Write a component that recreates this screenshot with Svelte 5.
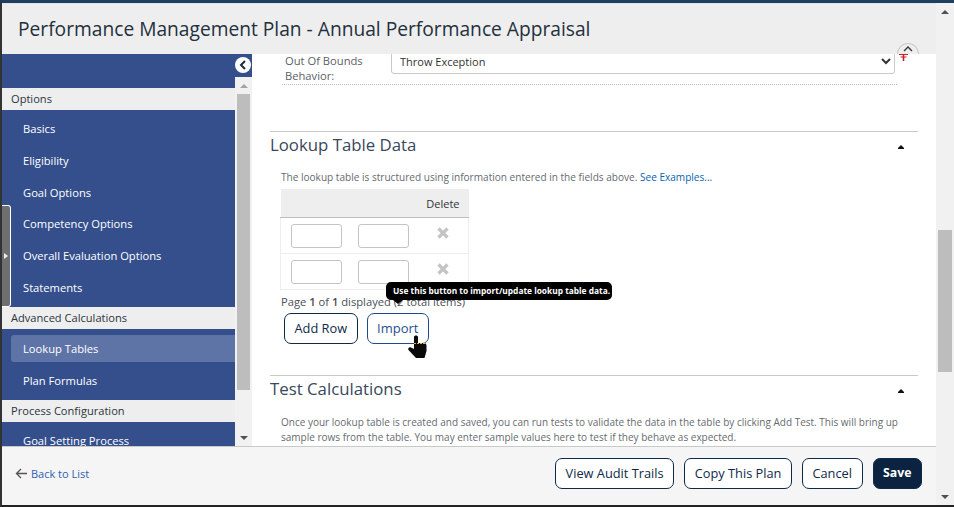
<script>
  const groups = [
    { title: 'Options', items: ['Basics', 'Eligibility', 'Goal Options', 'Competency Options', 'Overall Evaluation Options', 'Statements'] },
    { title: 'Advanced Calculations', items: ['Lookup Tables', 'Plan Formulas'] },
    { title: 'Process Configuration', items: ['Goal Setting Process'] }
  ];
  const active = 'Lookup Tables';
</script>

<div class="frame">
  <div class="window">
    <header class="title"><h1>Performance Management Plan - Annual Performance Appraisal</h1></header>

    <div class="middle">
      <aside class="side">
        <div class="side-top">
          <button class="collapse" aria-label="Collapse">
            <svg width="10" height="12" viewBox="0 0 10 12"><path d="M7 2 3 6l4 4" fill="none" stroke="#1d2b3a" stroke-width="2"/></svg>
          </button>
        </div>
        <div class="side-body">
          <nav class="nav">
            {#each groups as g}
              <div class="group">{g.title}</div>
              <ul>
                {#each g.items as item}
                  <li class:active={item === active}>{item}</li>
                {/each}
              </ul>
            {/each}
          </nav>
          <div class="bar small">
            <span class="up"></span>
            <div class="track"><div class="thumb"></div></div>
            <span class="down"></span>
          </div>
        </div>
        <div class="handle"><span></span></div>
      </aside>

      <main class="content">
        <div class="field">
          <label for="bounds">Out Of Bounds Behavior:</label>
          <select id="bounds"><option>Throw Exception</option></select>
        </div>

        <section class="lookup">
          <div class="sec-head">
            <h2>Lookup Table Data</h2>
            <span class="caret"></span>
          </div>
          <p class="hint">The lookup table is structured using information entered in the fields above. <a href="#top">See Examples...</a></p>
          <table>
            <thead>
              <tr><th></th><th></th><th>Delete</th></tr>
            </thead>
            <tbody>
              {#each [0, 1] as row}
                <tr>
                  <td><input aria-label="Value {row}" /></td>
                  <td><input aria-label="Result {row}" /></td>
                  <td class="del">
                    <svg width="12" height="12" viewBox="0 0 12 12"><path d="M1.500 1.500l9 9M10.500 1.500l-9 9" stroke="#c4c4c4" stroke-width="3.200"/></svg>
                  </td>
                </tr>
              {/each}
            </tbody>
          </table>
          <div class="pager">Page <b>1</b> of <b>1</b> displayed (2 total items)</div>
          <div class="actions">
            <button class="btn">Add Row</button>
            <button class="btn import">Import</button>
          </div>
          <div class="tip">Use this button to import/update lookup table data.</div>
          <svg class="cursor" width="19" height="24" viewBox="0 0 19 24">
            <path d="M6 2c0-2 4-2 4 0v6h6c1.500 0 2.500 1 2.500 2.500V16l-2 7H8L.5 15c-1-2 1-3.500 2.500-2.500L6 14z" fill="#0a0a0a"/>
            <path d="M6 8.500h11" stroke="#f0b030" stroke-width="1" stroke-dasharray="2 1"/>
          </svg>
        </section>

        <section class="tests">
          <div class="sec-head">
            <h2>Test Calculations</h2>
            <span class="caret"></span>
          </div>
          <p class="hint">Once your lookup table is created and saved, you can run tests to validate the data in the table by clicking Add Test. This will bring up sample rows from the table. You may enter sample values here to test if they behave as expected.</p>
        </section>
      </main>

      <button class="top-btn" aria-label="Back to top">
        <svg width="10" height="6" viewBox="0 0 10 6"><path d="M1 5l4-4 4 4" fill="none" stroke="#333" stroke-width="1.400"/></svg>
      </button>
      <svg class="pin" width="9" height="7" viewBox="0 0 9 7"><path d="M0 .500h9M1.500 3h6" stroke="#c8202a" stroke-width="1.100"/><path d="M4.500 0v7" stroke="#c8202a" stroke-width="1.600"/></svg>
    </div>

    <footer class="foot">
      <a class="back" href="#top">
        <svg width="13" height="11" viewBox="0 0 13 11"><path d="M6 1 1.500 5.500 6 10M1.500 5.500H12" fill="none" stroke="#555" stroke-width="1.300"/></svg>
        Back to List
      </a>
      <div class="foot-btns">
        <button class="btn wide">View Audit Trails</button>
        <button class="btn wide">Copy This Plan</button>
        <button class="btn wide">Cancel</button>
        <button class="btn wide save">Save</button>
      </div>
    </footer>
  </div>

  <div class="bar page">
    <span class="up"></span>
    <div class="track"><div class="thumb"></div></div>
    <span class="down"></span>
  </div>
</div>

<style>
  :global(body) {
    margin: 0;
    background: #fff;
    font-family: 'Open Sans', sans-serif;
    overflow: hidden;
  }

  .frame {
    box-sizing: border-box;
    width: 954px;
    height: 507px;
    display: flex;
    border-top: 3px solid #1f3f61;
    border-left: 2px solid #333;
    border-bottom: 2px solid #222;
    background: #f1f1f1;
    overflow: hidden;
  }

  .window {
    width: 934px;
    display: flex;
    flex-direction: column;
    position: relative;
  }

  .title {
    height: 51px;
    flex: none;
    box-sizing: border-box;
    background: #eeeeee;
    border-top: 1px solid #e4e4e4;
    padding: 0 0 1px 16px;
    display: flex;
    align-items: center;
  }

  h1 {
    margin: 0;
    font-size: 19.200px;
    font-weight: 400;
    color: #23303d;
  }

  .middle {
    flex: 1;
    min-height: 0;
    display: flex;
    background: #fff;
    position: relative;
  }

  .side {
    width: 250px;
    flex: none;
    display: flex;
    flex-direction: column;
    position: relative;
    z-index: 2;
  }

  .side-top {
    height: 23px;
    flex: none;
    background: #344f8c;
    position: relative;
  }

  .collapse {
    position: absolute;
    left: 233px;
    top: 3px;
    width: 16px;
    height: 16px;
    border: 0;
    padding: 0;
    border-radius: 50%;
    background: #fff;
    display: flex;
    align-items: center;
    justify-content: center;
  }

  .side-body {
    flex: 1;
    min-height: 0;
    display: flex;
  }

  .nav {
    width: 233px;
    flex: none;
    background: #344f8c;
    overflow: hidden;
    padding-top: 11px;
  }

  .group {
    height: 21.600px;
    line-height: 21.600px;
    background: #eeeeee;
    color: #2b3440;
    font-size: 11.100px;
    font-weight: 500;
    padding-left: 9px;
  }

  ul {
    list-style: none;
    margin: 0;
    padding: 3.500px 0;
  }

  li {
    height: 31.800px;
    line-height: 31.800px;
    font-size: 11.200px;
    color: #fff;
    padding-left: 21px;
  }

  li.active {
    height: 26.800px;
    line-height: 28.500px;
    margin: 2.500px 0 3px 9px;
    padding-left: 12px;
    background: #5f74a6;
    border-radius: 3px 0 0 3px;
  }

  .handle {
    position: absolute;
    left: 0;
    top: 151px;
    width: 9px;
    height: 102px;
    box-sizing: border-box;
    background: #6f6f6f;
    border: 1px solid #fff;
    border-left: 0;
    border-radius: 0 3px 3px 0;
    display: flex;
    align-items: center;
    justify-content: center;
  }

  .handle span {
    border-left: 4px solid #eee;
    border-top: 3.500px solid transparent;
    border-bottom: 3.500px solid transparent;
  }

  .bar {
    display: flex;
    flex-direction: column;
    align-items: center;
    background: #f1f1f1;
  }

  .bar.small {
    width: 17px;
    flex: none;
  }

  .bar.page {
    width: 18px;
    flex: none;
  }

  .track {
    flex: 1;
    width: 100%;
    position: relative;
  }

  .thumb {
    position: absolute;
    left: 2px;
    right: 2px;
    background: #bdbdbd;
  }

  .small .thumb {
    top: 0;
    height: 296px;
  }

  .page .thumb {
    top: 210px;
    height: 142px;
  }

  .up,
  .down {
    flex: none;
    height: 17px;
    display: flex;
    align-items: center;
    justify-content: center;
  }

  .up::before {
    content: '';
    border-left: 4px solid transparent;
    border-right: 4px solid transparent;
    border-bottom: 4px solid #505050;
  }

  .down::before {
    content: '';
    border-left: 4px solid transparent;
    border-right: 4px solid transparent;
    border-top: 4px solid #505050;
  }

  .small .up::before {
    border-bottom-color: #a3a3a3;
  }

  .content {
    flex: 1;
    min-width: 0;
    background: #fff;
    overflow: hidden;
    padding: 0 18px;
  }

  .field {
    display: flex;
    margin: 0 21px 0 12px;
    padding-bottom: 5px;
    border-bottom: 1px dotted #bbb;
    height: 25px;
  }

  .field label {
    width: 106px;
    flex: none;
    margin-top: -1px;
    padding-left: 3px;
    font-size: 11.200px;
    line-height: 15px;
    color: #5a5f65;
  }

  select {
    width: 504px;
    height: 26px;
    margin-top: -6px;
    box-sizing: border-box;
    border: 1px solid #c9c9c9;
    border-radius: 3px;
    background: #fff;
    font-family: inherit;
    font-size: 11px;
    color: #333;
    padding-left: 4px;
  }

  .lookup {
    margin-top: 46px;
    border-top: 1px solid #c9c9c9;
    position: relative;
    height: 243px;
  }

  .tests {
    border-top: 1px solid #c9c9c9;
  }

  .sec-head {
    display: flex;
    justify-content: space-between;
    align-items: center;
    height: 26px;
  }

  h2 {
    margin: 0 0 2px 0;
    font-size: 16.800px;
    font-weight: 400;
    color: #39475a;
  }

  .caret {
    width: 0;
    margin: 2px 14px 0 0;
    border-left: 3px solid transparent;
    border-right: 3px solid transparent;
    border-bottom: 3px solid #111;
    box-shadow: 0 1px 0 #111;
  }

  .hint {
    margin: 12px 0 0 11px;
    font-size: 10px;
    line-height: 15px;
    color: #666b70;
  }

  .lookup .hint {
    font-size: 10.070px;
  }

  .tests .hint {
    margin-top: 13px;
  }

  a {
    color: #0a63b0;
    text-decoration: none;
  }

  table {
    margin: 4px 0 0 10px;
    border-collapse: collapse;
    table-layout: fixed;
    width: 188px;
  }

  th {
    background: #eeeeee;
    width: 67px;
    height: 28px;
    padding: 0;
    font-size: 11px;
    font-weight: 500;
    color: #333;
    border-bottom: 1px solid #bdbdbd;
  }

  th:last-child {
    width: 54px;
    text-align: right;
    padding-right: 9px;
    box-sizing: border-box;
  }

  td {
    height: 35px;
    padding: 0 0 0 10px;
    border-bottom: 1px solid #eeeeee;
  }

  tbody tr td:first-child {
    border-left: 1px solid #eeeeee;
  }

  tbody tr td:last-child {
    border-right: 1px solid #eeeeee;
  }

  input {
    display: block;
    box-sizing: border-box;
    width: 51px;
    height: 24px;
    border: 1px solid #c4c4c4;
    border-radius: 3px;
    background: #fff;
  }

  .del {
    padding: 0;
  }

  .del svg {
    display: block;
    margin: 0 0 6px 22px;
  }

  .pager {
    margin: 4px 0 0 11px;
    font-size: 11.200px;
    color: #4a4f55;
  }

  .pager b {
    font-weight: 600;
  }

  .actions {
    display: flex;
    gap: 9px;
    margin: 4px 0 0 14px;
  }

  .btn {
    box-sizing: border-box;
    height: 31px;
    padding: 0 9.500px 2px;
    background: #fff;
    border: 1px solid #0e2a47;
    border-radius: 7px;
    font-family: inherit;
    font-size: 12.800px;
    font-weight: 500;
    color: #0e2a47;
  }

  .import {
    border-color: #1f4a8c;
    color: #24508f;
    font-size: 13px;
  }

  .tip {
    position: absolute;
    left: 116px;
    top: 150px;
    height: 18px;
    line-height: 18px;
    padding: 0 2px 0 7px;
    background: #000;
    color: #fff;
    border-radius: 5px;
    font-size: 8.350px;
    font-weight: 700;
    white-space: nowrap;
  }

  .tip::after {
    content: '';
    position: absolute;
    left: 7px;
    top: 18px;
    border-left: 5px solid transparent;
    border-right: 5px solid transparent;
    border-top: 4px solid #000;
  }

  .cursor {
    position: absolute;
    left: 138px;
    top: 203px;
  }

  .top-btn {
    position: absolute;
    left: 895px;
    top: -11px;
    width: 22px;
    height: 11px;
    padding: 2px 0 0;
    box-sizing: border-box;
    border: 1px solid #ccc;
    border-bottom: 0;
    background: #eee;
    border-radius: 11px 11px 0 0;
    display: flex;
    justify-content: center;
    align-items: flex-start;
  }

  .pin {
    position: absolute;
    left: 897px;
    top: 0;
  }

  .foot {
    height: 59px;
    flex: none;
    box-sizing: border-box;
    background: #f5f5f5;
    border-top: 1px solid #c9c9c9;
    display: flex;
    align-items: center;
    justify-content: space-between;
    padding: 0 14px 5px 13px;
  }

  .back {
    display: flex;
    align-items: center;
    gap: 3px;
    font-size: 11px;
    color: #2f5fb3;
  }

  .foot-btns {
    display: flex;
    gap: 10px;
  }

  .wide {
    font-size: 12.800px;
  }

  .save {
    background: #0b2340;
    color: #fff;
    font-size: 12.300px;
    font-weight: 700;
  }
</style>
